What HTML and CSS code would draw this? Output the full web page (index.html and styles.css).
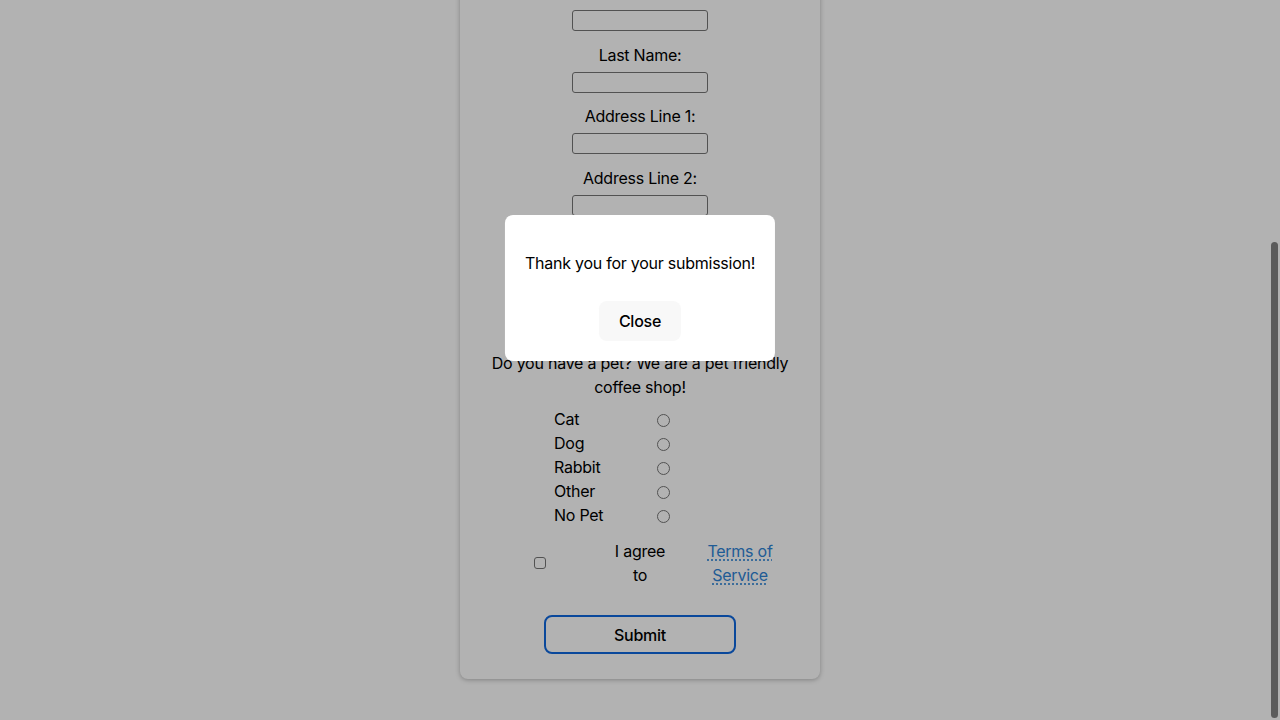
FILE: index.html
```html
<!DOCTYPE html>
<html lang="en">
<head>
<meta charset="utf-8">
<title>Coffee Shop Sign Up</title>
<link rel="stylesheet" href="styles.css">
</head>
<body>
<main class="page">
  <form class="card">
    <div class="field"><label>First Name:</label><input type="text" class="text-input"></div>
    <div class="field"><label>Last Name:</label><input type="text" class="text-input"></div>
    <div class="field"><label>Address Line 1:</label><input type="text" class="text-input"></div>
    <div class="field"><label>Address Line 2:</label><input type="text" class="text-input"></div>
    <div class="field"><label>City:</label><input type="text" class="text-input"></div>
    <div class="field"><label>Phone Number:</label><input type="text" class="text-input"></div>
    <p class="pet-question">Do you have a pet? We are a pet friendly coffee shop!</p>
    <div class="pets">
      <label class="pet-label">Cat</label><input type="radio" name="pet" class="radio">
      <label class="pet-label">Dog</label><input type="radio" name="pet" class="radio">
      <label class="pet-label">Rabbit</label><input type="radio" name="pet" class="radio">
      <label class="pet-label">Other</label><input type="radio" name="pet" class="radio">
      <label class="pet-label">No Pet</label><input type="radio" name="pet" class="radio">
    </div>
    <div class="agree">
      <input type="checkbox" class="checkbox">
      <span class="agree-text">I agree to</span>
      <a class="tos" href="#">Terms of Service</a>
    </div>
    <button type="button" class="submit">Submit</button>
  </form>
</main>
<div class="overlay"></div>
<div class="modal">
  <p class="modal-text">Thank you for your submission!</p>
  <button type="button" class="close">Close</button>
</div>
<div class="scroll-thumb"></div>
</body>
</html>
```
FILE: styles.css
```css
html, body {
  margin: 0;
  padding: 0;
  height: 100%;
  overflow: hidden;
  background: #ffffff;
  font-family: Inter, "Noto Sans", "Liberation Sans", sans-serif;
  font-size: 16px;
  letter-spacing: -0.25px;
  color: #000;
}

.page {
  display: flex;
  justify-content: center;
}

.card {
  width: 360px;
  box-sizing: border-box;
  margin-top: -19px;
  padding: 0 20px 25px;
  background: #ffffff;
  border-radius: 8px;
  box-shadow: 0 1px 5px rgba(0, 0, 0, 0.28);
  display: flex;
  flex-direction: column;
  align-items: center;
}

.field {
  display: flex;
  flex-direction: column;
  align-items: center;
  gap: 5px;
  margin-bottom: 11.5px;
}

.field label {
  line-height: 24px;
}

.text-input {
  box-sizing: border-box;
  width: 136px;
  height: 21px;
  margin: 0;
  border: 1px solid #767676;
  border-radius: 3px;
  background: #fff;
}

.pet-question {
  margin: 1px 0 8px;
  line-height: 24px;
  text-align: center;
}

.pets {
  align-self: flex-start;
  margin-left: 74px;
  display: grid;
  grid-template-columns: 103px 13px;
  grid-auto-rows: 24px;
  align-items: center;
}

.pet-label {
  line-height: 24px;
}

.radio {
  appearance: none;
  margin: 2px 0 0;
  width: 13px;
  height: 13px;
  box-sizing: border-box;
  border: 1px solid #767676;
  border-radius: 50%;
  background: #fff;
}

.agree {
  margin-top: 12px;
  display: grid;
  grid-template-columns: repeat(3, 68px);
  column-gap: 32px;
  align-items: center;
  justify-items: center;
  text-align: center;
  line-height: 24px;
}

.checkbox {
  appearance: none;
  margin: 0;
  width: 12px;
  height: 12px;
  box-sizing: border-box;
  border: 1px solid #767676;
  border-radius: 3px;
  background: #fff;
}

.tos {
  color: #2f84d6;
  text-decoration: underline dotted;
  text-underline-offset: 3px;
}

.submit {
  margin-top: 28px;
  width: 192px;
  height: 39px;
  box-sizing: border-box;
  border: 2px solid #0f68df;
  border-radius: 8px;
  background: #ffffff;
  font-family: inherit;
  font-size: 16px;
  font-weight: 500;
  letter-spacing: -0.25px;
  color: #000;
}

.overlay {
  position: fixed;
  inset: 0;
  background: rgba(0, 0, 0, 0.3);
}

.modal {
  position: fixed;
  top: 215px;
  left: 50%;
  transform: translateX(-50%);
  padding: 20px;
  background: #ffffff;
  border-radius: 8px;
  display: flex;
  flex-direction: column;
  align-items: center;
  white-space: nowrap;
}

.modal-text {
  margin: 16px 0 26px;
  line-height: 24px;
}

.close {
  width: 82px;
  height: 40px;
  border: none;
  border-radius: 8px;
  background: #f8f8f8;
  font-family: inherit;
  font-size: 16px;
  font-weight: 500;
  letter-spacing: -0.25px;
  color: #000;
}

.scroll-thumb {
  position: fixed;
  right: 2px;
  top: 242px;
  width: 7px;
  height: 476px;
  border-radius: 4px;
  background: #5b5b5b;
}
```
